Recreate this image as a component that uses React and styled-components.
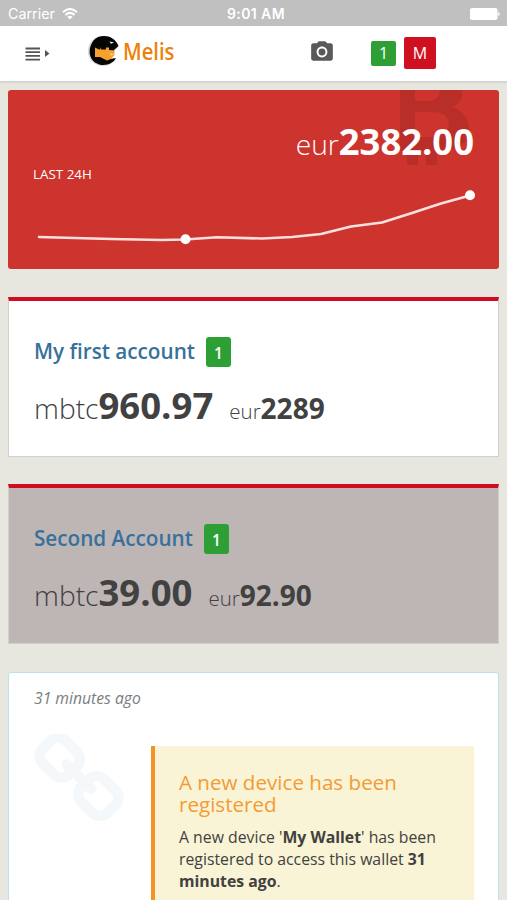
import React from "react";
import styled, { createGlobalStyle } from "styled-components";
import { MdCameraAlt } from "react-icons/md";

const GlobalStyle = createGlobalStyle`
  * { box-sizing: border-box; }
  body {
    margin: 0;
    background: #e7e6df;
    font-family: "Open Sans", "Noto Sans", sans-serif;
    color: #414141;
  }
`;

const Screen = styled.div`
  height: 900px;
  overflow: hidden;
  background: #e7e6df;
`;

const StatusBar = styled.div`
  height: 26px;
  padding: 1px 7px 0 8px;
  display: grid;
  grid-template-columns: 219px 1fr auto;
  align-items: center;
  background: #c0c0c0;
  color: #fff;
  font: 14.3px "Inter", sans-serif;
`;

const Carrier = styled.div`
  display: flex;
  align-items: center;
  gap: 7px;
`;

const Clock = styled.div`
  font-weight: 600;
  font-size: 14px;
  letter-spacing: 0.4px;
`;

const BatterySlot = styled.div`
  display: flex;
  justify-content: flex-end;
`;

const Navbar = styled.header`
  height: 56px;
  display: flex;
  align-items: center;
  padding-left: 25px;
  background: #fff;
  border-bottom: 1px solid #cfcfcb;
  box-shadow: 0 1px 2px rgba(0, 0, 0, 0.08);
`;

const MenuIcon = styled.svg`
  margin-right: 38px;
`;

const Brand = styled.div`
  display: flex;
  align-items: center;
  gap: 3px;
  width: 221px;
  margin-top: -5px;
  color: #ec8309;
  font: 600 23px/32px "Open Sans", sans-serif;
`;

const BrandName = styled.span`
  transform-origin: left;
  transform: scaleX(0.88);
`;

const CameraButton = styled.div`
  display: flex;
  width: 62px;
  color: #595959;
  margin-top: -3px;
`;

const NavBadge = styled.span`
  width: ${(p) => p.$size}px;
  height: ${(p) => p.$size}px;
  display: flex;
  align-items: center;
  justify-content: center;
  margin-right: 8px;
  margin-top: -1px;
  border-radius: 2px;
  background: ${(p) => p.$color};
  color: #fff;
  font-size: 16px;
`;

const Content = styled.main`
  padding: 8px 8px 0;
`;

const PriceCard = styled.section`
  position: relative;
  height: 179px;
  overflow: hidden;
  border-radius: 3px;
  background: #cc342d;
  color: #fff;
  padding: 27px 25px 0;
  margin-bottom: 28px;
`;

const Watermark = styled.svg`
  position: absolute;
  top: 0;
  left: 391px;
`;

const Price = styled.div`
  position: relative;
  text-align: right;
  font-size: 36.4px;
  line-height: 48px;
  font-weight: 700;
`;

const Currency = styled.span`
  font-weight: 300;
  font-size: ${(p) => p.$size}px;
`;

const PeriodLabel = styled.div`
  margin-top: -3px;
  font-size: 13.4px;
  line-height: 18px;
`;

const Chart = styled.svg`
  display: block;
  margin: 7px 0 0 -25px;
`;

const AccountCard = styled.section`
  height: 160px;
  margin-bottom: 27px;
  padding: 33px 25px 0;
  background: ${(p) => (p.$muted ? "#beb5b5" : "#fff")};
  border: 1px solid #d0d0ce;
  border-top: 4px solid #cf0c20;
`;

const AccountHead = styled.div`
  display: flex;
  align-items: center;
  height: 34px;
`;

const AccountName = styled.h2`
  margin: 0 11px 0 0;
  font-size: 20.7px;
  line-height: 30px;
  font-weight: 600;
  color: #37719b;
`;

const AccountBadge = styled.span`
  width: 25px;
  height: 30px;
  margin-top: 2px;
  border-radius: 3px;
  background: #2e9f35;
  color: #fff;
  font-size: 15.5px;
  font-weight: 600;
  line-height: 32px;
  text-align: center;
`;

const Balances = styled.div`
  display: flex;
  align-items: baseline;
  gap: 16px;
  margin-top: 11px;
  font-weight: 700;
  line-height: 52px;
`;

const Amount = styled.span`
  font-size: ${(p) => p.$size}px;
  white-space: nowrap;
`;

const EventCard = styled.section`
  height: 260px;
  margin-top: 28px;
  padding: 14px 24px 0 25px;
  background: #fff;
  border: 1px solid #b9e2ee;
  border-radius: 3px;
`;

const EventTime = styled.div`
  font-size: 15.7px;
  line-height: 22px;
  font-style: italic;
  color: #7a7e80;
`;

const EventRow = styled.div`
  display: grid;
  grid-template-columns: 117px 1fr;
  margin-top: 37px;
`;

const ChainIcon = styled.svg`
  margin-top: -12px;
`;

const Notice = styled.div`
  height: 200px;
  padding: 25px 20px 0 24px;
  background: #f9f4d5;
  border-left: 4px solid #f39427;
`;

const NoticeTitle = styled.h3`
  margin: 0 0 11px;
  font-size: 20.6px;
  line-height: 22px;
  font-weight: 400;
  color: #f39b35;
`;

const NoticeText = styled.p`
  margin: 0;
  font-size: 15.8px;
  line-height: 22px;
  white-space: nowrap;
`;

const trend = [[39, 237], [111, 239], [161, 240], [185, 239.5], [217, 237.2], [262, 238.5], [292, 237], [321, 234], [351, 226.5], [382, 222.5], [412, 213], [441, 203.5], [470, 195.5]];

function WifiIcon() {
  return (
    <svg width="16" height="12" viewBox="0 0 16 12" fill="none" stroke="#fff" strokeWidth="2">
      <path d="M1 4.2Q8-2.2 15 4.2M3.5 7Q8 2.8 12.5 7" />
      <path d="M5.4 8.8Q8 6.6 10.6 8.8L8 11.6Z" fill="#fff" stroke="none" />
    </svg>
  );
}

function BrandMark() {
  return (
    <svg width="32" height="32" viewBox="0 0 32 32">
      <circle cx="15" cy="16" r="15.3" fill="#dcdcdc" />
      <path d="M26 26L19 20L30 13L34 20Z" fill="#fff" />
      <path d="M30.500 11C26 -0.500 12 -1.500 5.500 5.500C-1 14 1 25 9 28.500C16 32 25 29 28 23L22 24L26 15Z" fill="#050505" />
      <path d="M7 12.500L11 14.500H12V12L13 14.500H18V12.500H21V15L26.500 15.500V20L23 24L19 25.500L12 22L7 22Z" fill="#f5a12b" />
      <path d="M21.500 18L26 19L23 21Z" fill="#ffc76b" />
      <path d="M21.500 6.500L26 7.500L23 8.700Z" fill="#fff" />
    </svg>
  );
}

function Account({ name, count, mbtc, eur, muted }) {
  return (
    <AccountCard $muted={muted}>
      <AccountHead>
        <AccountName>{name}</AccountName>
        <AccountBadge>{count}</AccountBadge>
      </AccountHead>
      <Balances>
        <Amount $size={36.5}><Currency $size={28.2}>mbtc</Currency>{mbtc}</Amount>
        <Amount $size={28}><Currency $size={20.5}>eur</Currency>{eur}</Amount>
      </Balances>
    </AccountCard>
  );
}

export default function App() {
  return (
    <Screen>
      <GlobalStyle />
      <StatusBar>
        <Carrier>Carrier <WifiIcon /></Carrier>
        <Clock>9:01 AM</Clock>
        <BatterySlot>
          <svg width="30" height="12" viewBox="0 0 30 12" fill="#fff">
            <rect width="27.500" height="12" rx="2" />
            <path d="M28.200 4Q29.800 4.500 29.800 6T28.200 8Z" />
          </svg>
        </BatterySlot>
      </StatusBar>
      <Navbar>
        <MenuIcon width="25" height="14" viewBox="0 0 25 14" fill="#555">
          <path d="M.5 .6H15V2.400H.5ZM.5 4.300H15V6.100H.5ZM.5 8H15V9.800H.5ZM.5 11.700H15V13.500H.5ZM20 3L24.500 6.500L20 10Z" />
        </MenuIcon>
        <Brand><BrandMark /><BrandName>Melis</BrandName></Brand>
        <CameraButton><MdCameraAlt size={26} /></CameraButton>
        <NavBadge $size={25} $color="#2e9f35">1</NavBadge>
        <NavBadge $size={32} $color="#cf1020">M</NavBadge>
      </Navbar>
      <Content>
        <PriceCard>
          <Watermark width="80" height="80" viewBox="0 0 80 80">
            <path fillRule="evenodd" fill="#b92e28" d="M1 0H63Q65 11 54 17Q70 24 70 39Q70 61 38 61V75H27V61H19V75H8V61H1ZM16 0V11H32Q41 9 41 0ZM16 22V47H34Q50 46 50 34Q49 22 34 22Z" />
          </Watermark>
          <Price><Currency $size={28.2}>eur</Currency>2382.00</Price>
          <PeriodLabel>LAST 24H</PeriodLabel>
          <Chart width="491" height="70" viewBox="8 190 491 70">
            <polyline points={trend.join(" ")} fill="none" stroke="#fbe0dd" strokeWidth="2.600" strokeLinejoin="round" strokeLinecap="round" />
            <circle cx="185.500" cy="239.300" r="5" fill="#fff" />
            <circle cx="470" cy="195.300" r="5" fill="#fff" />
          </Chart>
        </PriceCard>
        <Account name="My first account" count="1" mbtc="960.97" eur="2289" />
        <Account name="Second Account" count="1" mbtc="39.00" eur="92.90" muted />
        <EventCard>
          <EventTime>31 minutes ago</EventTime>
          <EventRow>
            <ChainIcon width="90" height="89" viewBox="16 48 1632 1632" fill="#f5f8fa">
              <path d="M1456 1216q0-40-28-68l-208-208q-28-28-68-28-42 0-72 32 3 3 19 18.500t21.500 21.500 15 19 13 25.500 3.500 27.500q0 40-28 68t-68 28q-15 0-27.500-3.500t-25.500-13-19-15-21.500-21.500-18.500-19q-33 31-33 73 0 40 28 68l206 207q27 27 68 27 40 0 68-26l147-146q28-28 28-67zm-703-705q0-40-28-68l-206-207q-28-28-68-28-39 0-68 27l-147 146q-28 28-28 67 0 40 28 68l208 208q27 27 68 27 42 0 72-31-3-3-19-18.500t-21.500-21.500-15-19-13-25.500-3.500-27.500q0-40 28-68t68-28q15 0 27.500 3.500t25.500 13 19 15 21.500 21.500 18.500 19q33-31 33-73zm895 705q0 120-85 203l-147 146q-83 83-203 83-121 0-204-85l-206-207q-83-83-83-203 0-123 88-209l-88-88q-86 88-208 88-120 0-204-84l-208-208q-84-84-84-204t85-203l147-146q83-83 203-83 121 0 204 85l206 207q83 83 83 203 0 123-88 209l88 88q86-88 208-88 120 0 204 84l208 208q84 84 84 204z" />
            </ChainIcon>
            <Notice>
              <NoticeTitle>A new device has been registered</NoticeTitle>
              <NoticeText>
                A new device '<b>My Wallet</b>' has been<br />
                registered to access this wallet <b>31<br />minutes ago</b>.
              </NoticeText>
            </Notice>
          </EventRow>
        </EventCard>
      </Content>
    </Screen>
  );
}
